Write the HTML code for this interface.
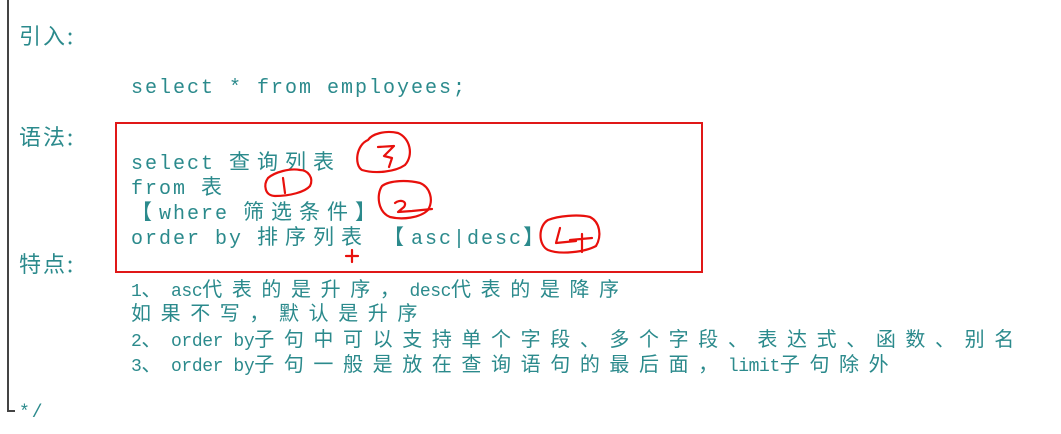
<!DOCTYPE html>
<html><head><meta charset="utf-8"><style>
body{margin:0;width:1061px;height:434px;background:#fff;position:relative;overflow:hidden;font-family:"Liberation Mono","Noto Sans CJK SC",monospace;color:#2b8a8c}
.t{position:absolute;white-space:pre;line-height:25px;font-size:20px;letter-spacing:2px}
.t .c{font-family:"Noto Sans CJK SC",sans-serif;letter-spacing:7px;font-size:21px}
.l{position:absolute;white-space:pre;line-height:25px;font-size:18px;letter-spacing:-0.4px}
.l .c{font-family:"Noto Sans CJK SC",sans-serif;font-size:20px;letter-spacing:9.6px}
.h{position:absolute;font-family:"Noto Sans CJK SC",sans-serif;font-size:22px;line-height:25px;letter-spacing:2px}
</style></head><body>
<div style="position:absolute;left:7px;top:0;width:2px;height:412px;background:#444"></div>
<div style="position:absolute;left:7px;top:410px;width:8px;height:2px;background:#444"></div>
<div class="h" style="left:19px;top:23px">引入:</div>
<div class="t" style="left:131px;top:76px">select * from employees;</div>
<div class="h" style="left:19px;top:124px">语法:</div>
<div style="position:absolute;left:115px;top:122px;width:584px;height:147px;border:2px solid #e01818"></div>
<div class="t" style="left:131px;top:149px">select <span class="c">查询列表</span></div>
<div class="t" style="left:131px;top:174px">from <span class="c">表</span></div>
<div class="t" style="left:131px;top:199px"><span class="c">【</span>where <span class="c">筛选条件】</span></div>
<div class="t" style="left:131px;top:224px">order by <span class="c">排序列表</span> <span class="c">【</span>asc|desc<span class="c">】</span></div>
<div class="h" style="left:19px;top:251px">特点:</div>
<div class="l" style="left:131px;top:275px">1<span class="c">、</span>asc<span class="c">代表的是升序，</span>desc<span class="c">代表的是降序</span></div>
<div class="l" style="left:131px;top:299px"><span class="c">如果不写，默认是升序</span></div>
<div class="l" style="left:131px;top:325px">2<span class="c">、</span>order by<span class="c">子句中可以支持单个字段、多个字段、表达式、函数、别名</span></div>
<div class="l" style="left:131px;top:350px">3<span class="c">、</span>order by<span class="c">子句一般是放在查询语句的最后面，</span>limit<span class="c">子句除外</span></div>
<div class="t" style="left:19px;top:401px;font-size:18px">*/</div>
<svg width="1061" height="434" style="position:absolute;left:0;top:0" fill="none" stroke="#e8100c" stroke-width="2.2" stroke-linecap="round" stroke-linejoin="round">
<path d="M368 140 C356 145 354 165 362 170 C375 174 395 172 405 165 C414 155 410 138 398 133 C385 130 372 134 368 140"/>
<path d="M378 147 L394 146 L384 156 L392 158 L389 167"/>
<path d="M268 178 C263 185 265 196 275 196 C290 196 305 192 310 186 C314 178 308 170 300 170 C290 168 275 172 268 178"/>
<path d="M283 178 L285 193"/>
<path d="M382 186 C376 195 378 212 390 217 C402 220 420 218 428 210 C434 200 430 187 420 183 C408 180 390 180 382 186"/>
<path d="M395 203 C400 199 408 201 404 207 L398 212 L412 211 L432 209"/>
<path d="M548 220 C538 226 538 245 548 250 C560 255 585 252 596 246 C602 236 600 222 590 217 C578 214 558 216 548 220"/>
<path d="M560 228 L556 243 L576 241"/>
<path d="M570 240 L592 238 M582 234 L582 252"/>
<path d="M346 256 L358 256 M352 250 L352 262"/>
</svg>
</body></html>
